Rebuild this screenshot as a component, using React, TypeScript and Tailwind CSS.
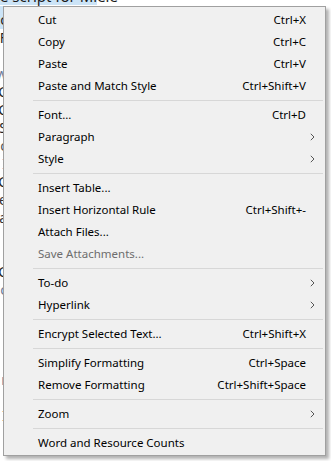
import React from 'react';

type Item =
  | { kind: 'sep' }
  | { kind: 'item'; label: string; shortcut?: string; submenu?: boolean; disabled?: boolean };

const ITEMS: Item[] = [
  { kind: 'item', label: 'Cut', shortcut: 'Ctrl+X' },
  { kind: 'item', label: 'Copy', shortcut: 'Ctrl+C' },
  { kind: 'item', label: 'Paste', shortcut: 'Ctrl+V' },
  { kind: 'item', label: 'Paste and Match Style', shortcut: 'Ctrl+Shift+V' },
  { kind: 'sep' },
  { kind: 'item', label: 'Font...', shortcut: 'Ctrl+D' },
  { kind: 'item', label: 'Paragraph', submenu: true },
  { kind: 'item', label: 'Style', submenu: true },
  { kind: 'sep' },
  { kind: 'item', label: 'Insert Table...' },
  { kind: 'item', label: 'Insert Horizontal Rule', shortcut: 'Ctrl+Shift+-' },
  { kind: 'item', label: 'Attach Files...' },
  { kind: 'item', label: 'Save Attachments...', disabled: true },
  { kind: 'sep' },
  { kind: 'item', label: 'To-do', submenu: true },
  { kind: 'item', label: 'Hyperlink', submenu: true },
  { kind: 'sep' },
  { kind: 'item', label: 'Encrypt Selected Text...', shortcut: 'Ctrl+Shift+X' },
  { kind: 'sep' },
  { kind: 'item', label: 'Simplify Formatting', shortcut: 'Ctrl+Space' },
  { kind: 'item', label: 'Remove Formatting', shortcut: 'Ctrl+Shift+Space' },
  { kind: 'sep' },
  { kind: 'item', label: 'Zoom', submenu: true },
  { kind: 'sep' },
  { kind: 'item', label: 'Word and Resource Counts' },
];

// bits of the note text peeking out left of the menu, one per 18px line
const EDGE: { ch: string; cls: string }[] = [
  { ch: 'c', cls: 'text-[#222]' },
  { ch: 'F', cls: 'text-[#222]' },
  { ch: '', cls: '' },
  { ch: 'w', cls: 'text-[#6b7a99]' },
  { ch: 'C', cls: 'text-[#222]' },
  { ch: 'C', cls: 'text-[#222]' },
  { ch: 'S', cls: 'text-[#222]' },
  { ch: 'c', cls: 'text-[#555]' },
  { ch: 'I', cls: 'text-[#2a2a8a]' },
  { ch: 'C', cls: 'text-[#222]' },
  { ch: 'e', cls: 'text-[#333]' },
  { ch: 'a', cls: 'text-[#333]' },
  { ch: 'i', cls: 'text-[#2060b0]' },
  { ch: '.', cls: 'text-[#2060b0]' },
  { ch: 'C', cls: 'text-[#222]' },
  { ch: 'c', cls: 'text-[#6b7a99]' },
  { ch: '', cls: '' },
  { ch: '', cls: '' },
  { ch: '', cls: '' },
  { ch: '', cls: '' },
  { ch: 'r', cls: 'text-[#6b7a99]' },
  { ch: '', cls: '' },
  { ch: 'I', cls: 'text-[#a01818]' },
];

function Chevron() {
  return (
    <svg width="5" height="8" viewBox="0 0 5 8" className="block">
      <path d="M0.8 0.8 L4 4 L0.8 7.2" fill="none" stroke="#444" strokeWidth="0.9" />
    </svg>
  );
}

export default function App() {
  return (
    <div
      className="relative w-[331px] h-[461px] overflow-hidden bg-white"
      style={{ fontFamily: '"Noto Sans", "Open Sans", sans-serif' }}
    >
      {/* note text behind the menu */}
      <div className="flex flex-col">
        <div className="h-[6px] overflow-hidden">
          <div className="-mt-[13px] w-[97px] bg-[#cce4f7] text-[15px] leading-[18px] text-[#1a1a1a] whitespace-nowrap">
            e script for Miele
          </div>
        </div>
        <div className="h-[5px] w-[3px] bg-[#cce4f7]" />
        {EDGE.map((e, i) => (
          <div
            key={i}
            className={`h-[18px] w-[3px] overflow-hidden flex justify-end items-center text-[14px] leading-[16px] ${
              i === 0 ? 'bg-[#cce4f7]' : ''
            } ${e.cls}`}
          >
            <span className="-mr-[4px]">{e.ch}</span>
          </div>
        ))}
      </div>

      {/* context menu */}
      <div className="absolute left-[3px] top-[6px] w-[323px] border border-[#a0a0a0] bg-[#f0f0f0] pt-[2px] pb-[1px] shadow-[3px_3px_3px_rgba(0,0,0,0.3)] text-[11.5px] text-black">
        {ITEMS.map((it, i) =>
          it.kind === 'sep' ? (
            <div key={i} className="h-[7px] flex items-center pl-[29px] pr-[2px]">
              <div className="h-px w-full bg-[#d7d7d7]" />
            </div>
          ) : (
            <div key={i} className="h-[22px] flex items-center pl-[34px]">
              <span className={`whitespace-nowrap ${it.disabled ? 'text-[#6d6d6d]' : ''}`}>{it.label}</span>
              <span className="ml-auto whitespace-nowrap">{it.shortcut}</span>
              <span className="w-[19px] flex items-center pl-[4px]">{it.submenu && <Chevron />}</span>
            </div>
          )
        )}
      </div>
    </div>
  );
}
